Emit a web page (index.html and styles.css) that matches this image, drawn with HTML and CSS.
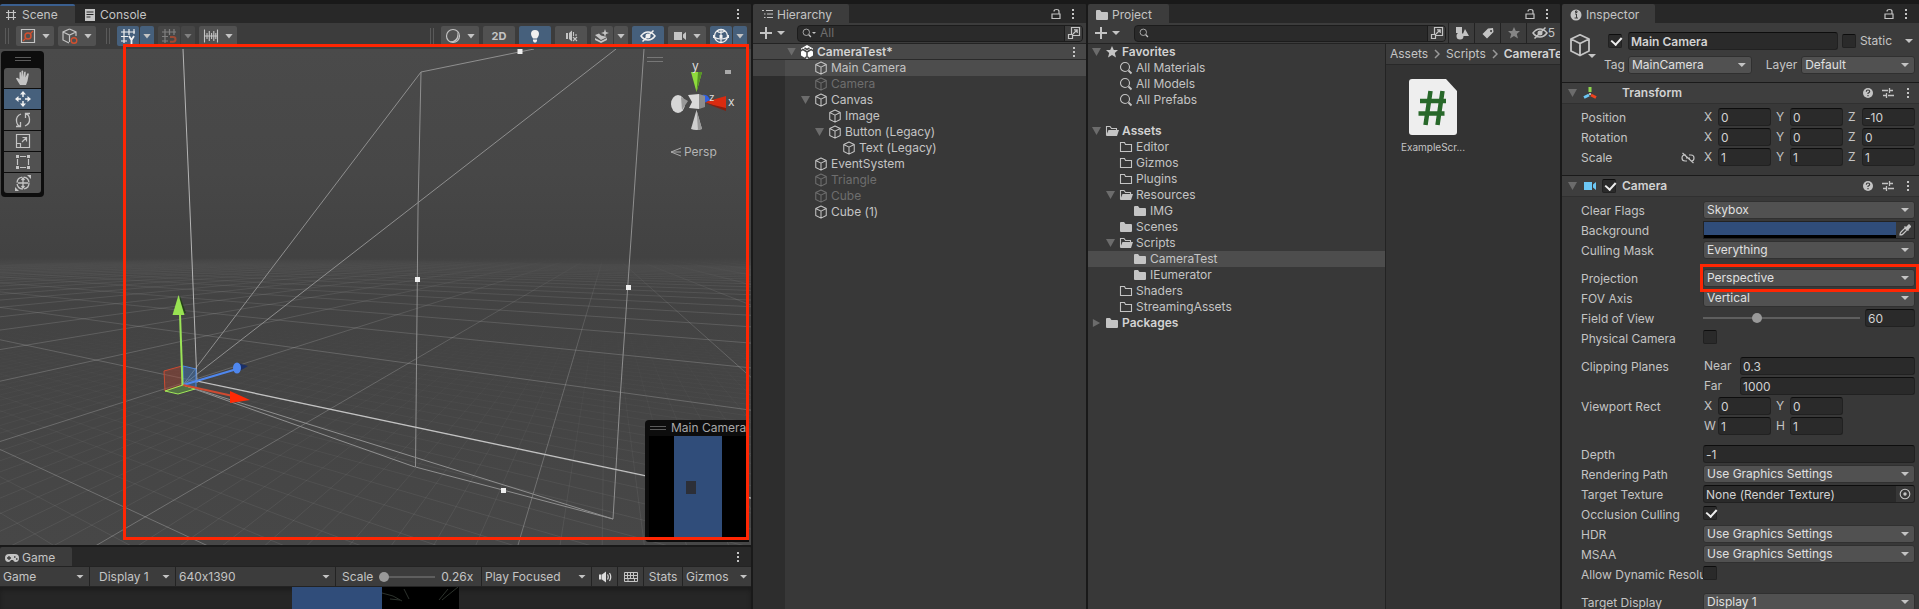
FILE: index.html
```html
<!DOCTYPE html>
<html lang="en">
<head>
<meta charset="utf-8">
<title>Editor - CameraTest</title>
<link rel="stylesheet" href="styles.css">
</head>
<body>
<svg class="sprite" aria-hidden="true">
  <symbol id="cube" viewBox="0 0 16 16"><path d="M8 1.2 14 4v8l-6 3-6-3V4zM2 4l6 3 6-3M8 7v8" fill="none" stroke="currentColor" stroke-width="1.2" stroke-linejoin="round"/></symbol>
  <symbol id="dots" viewBox="0 0 4 12"><path d="M1 1h2v2H1zM1 5h2v2H1zM1 9h2v2H1z" fill="currentColor"/></symbol>
  <symbol id="lock" viewBox="0 0 12 12"><path d="M2 6h8v4.5H2zM9 6V3.500Q9 1.500 6.500 1.500T4 3.500" fill="none" stroke="currentColor" stroke-width="1.2"/></symbol>
  <symbol id="folder" viewBox="0 0 14 12"><path d="M1 2q0-1 1-1h3l1.500 2H12q1 0 1 1v6q0 1-1 1H2q-1 0-1-1z" fill="currentColor"/></symbol>
  <symbol id="folder-empty" viewBox="0 0 14 12"><path d="M1.500 1.500h4l1 2h6v7h-11z" fill="none" stroke="currentColor" stroke-width="1.1"/></symbol>
  <symbol id="folder-open" viewBox="0 0 14 12"><path d="M1.500 10V1.500h3.500l1.500 2h5V5" fill="none" stroke="currentColor" stroke-width="1.1"/><path d="M3.500 5H14l-2 6H1z" fill="currentColor"/></symbol>
  <symbol id="search" viewBox="0 0 14 14"><circle cx="6" cy="6" r="4.500" fill="none" stroke="currentColor" stroke-width="1.100"/><path d="m9.500 9.500 3 3" stroke="currentColor" stroke-width="1.800"/></symbol>
  <symbol id="star" viewBox="0 0 14 14"><path d="m7 1 1.800 4H13L9.800 8l1.200 4.500L7 10l-4 2.500L4.200 8 1 5h4.200z" fill="currentColor"/></symbol>
  <symbol id="plus" viewBox="0 0 12 12"><path d="M6 0v12M0 6h12" stroke="currentColor" stroke-width="2"/></symbol>
  <symbol id="popout" viewBox="0 0 14 14"><path d="M4.500 8V1.500h8v8H6M1.500 8.500h4v4h-4zM6 8l4-4M7 3.800h3.200V7" fill="none" stroke="currentColor" stroke-width="1.200"/></symbol>
  <symbol id="help" viewBox="0 0 12 12"><circle cx="6" cy="6" r="5" fill="currentColor"/><path d="M4.300 4.800Q4.300 3 6 3t1.700 1.500Q7.700 5.500 6 6.200v.8M6 8v1.300" fill="none" stroke="#3c3c3c" stroke-width="1.200"/></symbol>
  <symbol id="preset" viewBox="0 0 12 12"><path d="M0 3.500h6M8 3.500h3M7.500 1v5M1 8.500h3M6 8.500h6M4.500 6v5" stroke="currentColor" stroke-width="1.300"/></symbol>
  <symbol id="eye-off" viewBox="0 0 16 14"><path d="M1 7q3-4 7-4t7 4q-3 4-7 4T1 7zM2.500 12.500l11-11" fill="none" stroke="currentColor" stroke-width="1.500"/><circle cx="8" cy="7" r="2.500" fill="currentColor"/></symbol>
  <symbol id="video" viewBox="0 0 14 12"><path d="M1 2h8v8H1zM10 4.500 13 2v8l-3-2.500z" fill="currentColor"/></symbol>
  <symbol id="camera-blue" viewBox="0 0 14 12"><path d="M1 2h8v8H1zM10 4.500 13 2v8l-3-2.500z" fill="#6cc7f5"/></symbol>
  <symbol id="grid-hash" viewBox="0 0 12 12"><path d="M3.500 1v10M8.500 1v10M1 3.500h10M1 8.500h10" stroke="currentColor" stroke-width="1.200"/></symbol>
  <symbol id="axes" viewBox="0 0 14 12"><path d="M7 0v5" stroke="#8fd94f" stroke-width="3"/><path d="m6 8-5 2.500" stroke="#6cc7f5" stroke-width="2.800"/><path d="m8 8 5 2.500" stroke="#f0431e" stroke-width="2.800"/><circle cx="7" cy="7" r="1" fill="#ddd"/></symbol>
</svg>

<main class="editor">
  <section class="left-column">
    <section class="panel scene-panel">
      <header class="tabs">
        <span class="tab tab-scene active"><svg class="i12"><use href="#grid-hash"/></svg>Scene</span>
        <span class="tab tab-plain"><svg class="i12" viewBox="0 0 12 12"><path d="M1 0h10v12H1z" fill="currentColor"/><path d="M2.500 3h7M2.500 5.500h7M2.500 8h4" stroke="#282828"/></svg>Console</span>
        <span class="tab-tools"><button class="bare" aria-label="Scene menu"><svg class="dots"><use href="#dots"/></svg></button></span>
      </header>
      <div class="scene-tools">
        <i class="grip"></i>
        <button class="tool drop" aria-label="Tool handle position"><svg class="i16" viewBox="0 0 16 16"><path d="M1.500 1.500h13v13h-13z" fill="none" stroke="currentColor" stroke-width="1.200"/><path d="m3 13 10-10" stroke="#d2502f" stroke-width="1.200"/><circle cx="8" cy="8" r="3" fill="#505050" stroke="#d2502f" stroke-width="1.500"/></svg></button>
        <button class="tool drop" aria-label="Tool handle rotation"><svg class="i16" viewBox="0 0 16 16"><path d="M7.500 1 14 4v4M7.500 1 1 4v8l6 3M1 4l6.500 3L14 4M7.500 7v7" fill="none" stroke="currentColor" stroke-width="1.200"/><circle cx="12" cy="12.500" r="2.800" fill="#505050" stroke="#d2502f" stroke-width="1.400"/></svg></button>
        <i class="grip wide"></i>
        <span class="split"><button class="tool on" aria-label="Grid visibility"><svg class="i16" viewBox="0 0 16 16"><path d="M4 1v14M9 1v6M14 1v5M1 4h14M1 8.500h7M1 13h6" stroke="currentColor" stroke-width="1.200"/><path d="m9 8 2.500 4L14 8M11.500 11.500V16" fill="none" stroke="currentColor" stroke-width="1.800"/></svg></button><button class="tool caret on" aria-label="Grid options"></button></span>
        <span class="split dim"><button class="tool" aria-label="Grid snapping"><svg class="i16" viewBox="0 0 16 16"><path d="M4 1v14M8.500 1v6M13 1v6M1 4h14M1 8.500h6M1 13h6" stroke="currentColor" stroke-width="1.200"/><path d="M9 9h3q2.500 0 2.500 2.300T12 13.800H9" fill="none" stroke="#ff5a30" stroke-width="2"/></svg></button><button class="tool caret" aria-label="Snap options"></button></span>
        <button class="tool drop" aria-label="Snap increment"><svg class="i16" viewBox="0 0 16 16"><path d="M1.500 1.500v13M14.500 1.500v13M4 5v6M6.300 3v10M8.600 5v6M10.800 3v10M12.800 5v6M1.500 8h13" stroke="currentColor" stroke-width="1.100"/></svg></button>
        <span class="spacer"></span>
        <i class="grip"></i>
        <button class="tool drop" aria-label="Draw mode"><svg class="i16" viewBox="0 0 16 16"><circle cx="8" cy="8" r="6.500" fill="none" stroke="currentColor" stroke-width="1.200"/><path d="M12 3.500Q15 8 12 12T4 13q6 1 8-4 1-3 0-5.500z" fill="currentColor"/></svg></button>
        <button class="tool wide-tool two-d">2D</button>
        <button class="tool wide-tool on" aria-label="Scene lighting"><svg class="i14" viewBox="0 0 14 14"><path d="M7 1a4 4 0 0 1 4 4q0 2-2 4.500H5Q3 7 3 5a4 4 0 0 1 4-4zM5 10.500h4V12l-1 1.500H6L5 12z" fill="currentColor"/></svg></button>
        <button class="tool wide-tool" aria-label="Scene audio"><svg class="i14" viewBox="0 0 14 14"><path d="M2 4h2v6H2zM5 4l3-2.500v11L5 10z" fill="currentColor"/><path d="M9.500 3v4M9 8l4 4M13 8l-4 4M12 5v2" stroke="currentColor" stroke-width="1.100"/></svg></button>
        <span class="split"><button class="tool" aria-label="Scene effects"><svg class="i16" viewBox="0 0 16 16"><path d="m1 7 4-1.500 2 2 4 1 2 .5-6 3zM1 10l6 3 6-3v2l-6 3-6-3z" fill="currentColor"/><path d="m11 1 1 3 3 1-3 1-1 3-1-3-3-1 3-1z" fill="currentColor"/></svg></button><button class="tool caret" aria-label="Effect options"></button></span>
        <button class="tool wide-tool on" aria-label="Scene visibility"><svg class="i16"><use href="#eye-off"/></svg></button>
        <button class="tool drop" aria-label="Scene camera"><svg class="i14"><use href="#video"/></svg></button>
        <span class="split"><button class="tool on" aria-label="Gizmo visibility"><svg class="i16" viewBox="0 0 16 16"><circle cx="8" cy="8" r="6.500" fill="none" stroke="currentColor" stroke-width="1.300"/><path d="M1.500 9.500q6.500 3 13 0M8 1.500v13M4 3q3 3 8 0" fill="none" stroke="currentColor" stroke-width="1.200"/><path d="M6.500 7h3v3h-3zM0 7h2v3H0zM14 7h2v3h-2z" fill="currentColor"/></svg></button><button class="tool caret on" aria-label="Gizmo options"></button></span>
      </div>
      <div class="viewport">
        <svg class="world" viewBox="0 49 751 496" preserveAspectRatio="xMinYMin slice">
          <defs>
            <linearGradient id="fade-major" gradientUnits="userSpaceOnUse" x1="0" y1="258" x2="0" y2="545"><stop offset="0" stop-color="#000"/><stop offset=".12" stop-color="#555"/><stop offset=".35" stop-color="#bbb"/><stop offset="1" stop-color="#fff"/></linearGradient>
            <linearGradient id="fade-minor" gradientUnits="userSpaceOnUse" x1="0" y1="320" x2="0" y2="545"><stop offset="0" stop-color="#000"/><stop offset="1" stop-color="#fff"/></linearGradient>
            <linearGradient id="sky" x1="0" y1="0" x2="0" y2="1"><stop offset="0" stop-color="#4a4a4a"/><stop offset=".25" stop-color="#474747"/><stop offset=".42" stop-color="#424242"/><stop offset=".435" stop-color="#474747"/><stop offset=".5" stop-color="#434343"/><stop offset="1" stop-color="#474747"/></linearGradient>
            <mask id="mask-major" maskUnits="userSpaceOnUse" x="0" y="49" width="751" height="496"><path d="M0 258h751v287H0z" fill="url(#fade-major)"/></mask>
            <mask id="mask-minor" maskUnits="userSpaceOnUse" x="0" y="49" width="751" height="496"><path d="M0 320h751v225H0z" fill="url(#fade-minor)"/></mask>
          </defs>
          <path d="M0 49h751v496H0z" fill="url(#sky)"/>
          <g mask="url(#mask-minor)"><path id="grid-minor" fill="none" stroke="#fff" stroke-opacity=".08"/></g>
          <g mask="url(#mask-major)"><path id="grid-major" fill="none" stroke="#fff" stroke-opacity=".25"/></g>
          <g fill="none" stroke="#8f8f8f">
            <path d="M183 385 421 72M183 385 616 49M183 385l232 82M183 385l430 134"/>
            <path d="M534 49 421 72l-3 138-2.500 257L613 519l7-119 13-190 11-161"/>
          </g>
          <path d="m183 49 6.500 150L197 383" fill="none" stroke="#b4b4b4"/>
          <path d="m197 381 554 117" fill="none" stroke="#c4c4c4" stroke-width="1.200"/>
          <path d="M517.500 49h5v5h-5zM501 488h5v5h-5zM415 277h5v5h-5zM626 285h5v5h-5z" fill="#eee"/>
          <path d="m164 371 18-5v19l-17 6z" fill="#b0402d" fill-opacity=".4" stroke="#cc4b32"/>
          <path d="m183 366 13 3v20l-13-4z" fill="#3d6fae" fill-opacity=".5" stroke="#4a86e0"/>
          <path d="m165 391 18-6 12 4-17 5z" fill="#5fa040" fill-opacity=".5" stroke="#a0e858"/>
          <path d="m238 363 10 3-10 6z" fill="#1b2f66"/><path d="m183 385 54-16" stroke="#4f87ee" stroke-width="2"/><ellipse cx="237" cy="368" rx="4" ry="5.500" fill="#4f87ee"/>
          <path d="m183 385 50 11" stroke="#cf4a30" stroke-width="2"/><path d="m230 391 20 9-20 3z" fill="#ff2a05"/>
          <path d="m180 296 6 17h-6z" fill="#24401a"/><path d="m180 314 2.500 71" stroke="#9be457" stroke-width="2"/><path d="m178.500 295 6 20h-12z" fill="#98e252"/>
        </svg>

        <aside class="palette" aria-label="Tools">
          <i class="handle"></i>
          <button class="tool first" aria-label="View"><svg class="i16" viewBox="0 0 16 16"><path d="M5 15 1 8.500q1-1.500 2.500 0l1 1V2.500q1-1 1.500 0L6.500 7V1q1-1 1.700 0v6l1-5q1-1 1.500 0L10.500 7.500l1.800-4q1.200-.5 1.500.5L12.500 11 11 15z" fill="currentColor"/></svg></button>
          <button class="tool on" aria-label="Move"><svg class="i16" viewBox="0 0 16 16"><path d="M8 3v3M8 10v3M3 8h3M10 8h3" stroke="currentColor" stroke-width="1.500"/><path d="m8 0 3 3.500H5zM8 16l3-3.500H5zM0 8l3.500-3v6zM16 8l-3.500-3v6z" fill="currentColor"/></svg></button>
          <button class="tool" aria-label="Rotate"><svg class="i16" viewBox="0 0 16 16"><path d="M6 2Q1 4 1.500 9t4 5M10 14q5-2 4.500-7t-4-5M10.500 6V1.500H15M5.500 10v4.500H1" fill="none" stroke="currentColor" stroke-width="1.300"/></svg></button>
          <button class="tool" aria-label="Scale"><svg class="i16" viewBox="0 0 16 16"><path d="M1.500 1.500h13v13h-13zM1.500 10.500h4v4M7 9l4-4M7.500 4.500h4v4" fill="none" stroke="currentColor" stroke-width="1.200"/></svg></button>
          <button class="tool" aria-label="Rect"><svg class="i16" viewBox="0 0 16 16"><path d="M5 2.500h6M5 13.500h6M2.500 5v6M13.500 5v6" stroke="currentColor" stroke-width="1.200"/><path d="M1 1h3v3H1zM12 1h3v3h-3zM1 12h3v3H1zM12 12h3v3h-3z" fill="currentColor"/></svg></button>
          <button class="tool last" aria-label="Transform"><svg class="i16" viewBox="0 0 16 16"><circle cx="8" cy="8" r="6" fill="none" stroke="currentColor" stroke-width="1.300" stroke-dasharray="8 1.400"/><path d="M8 3v10M3 8h10M6.500 5 8 3l1.500 2M6.500 11 8 13l1.500-2" fill="none" stroke="currentColor" stroke-width="1.300"/><path d="M12 0h4v4zM0 12v4h4z" fill="currentColor"/></svg></button>
        </aside>

        <figure class="orientation">
          <svg viewBox="0 0 70 80" class="gizmo">
            <path d="M0 7.500h16M0 11.500h16" stroke="#777"/>
            <path d="M44 22h11l-5.500 20z" fill="#8edb3c"/><path d="M51 22h4l-5.500 20z" fill="#569425"/>
            <path d="M49.500 60 44 79q5 2 11 0z" fill="#cfcfcf"/><path d="M49.500 60 51 80l4-1z" fill="#999"/>
            <path d="m58 52 21-6v14z" fill="#d92b10"/><path d="m58 53 21 5v3z" fill="#841f10"/>
            <path d="M55 45q6-1 8 5l-6 3z" fill="#2f5fe0"/>
            <path d="m41 45 11-1v15l-10-1 3-6z" fill="#dadada"/><path d="m52 44 6 2v11l-6 2z" fill="#8d8d8d"/>
            <ellipse cx="31" cy="54" rx="7" ry="9" fill="#d6d6d6"/><path d="m34 47 7 4-6 9z" fill="#999"/>
            <path d="M78 20h6v4h-6z" fill="#aaa"/>
          </svg>
          <span class="axis-y">y</span><span class="axis-z">z</span><span class="axis-x">x</span>
          <figcaption><svg class="i12" viewBox="0 0 12 12"><path d="M11 2 1 6l10 4M1 6h10" fill="none" stroke="#aaa"/></svg>Persp</figcaption>
        </figure>

        <aside class="preview">
          <header><i class="handle"></i>Main Camera</header>
          <div class="preview-image"><div class="preview-sky"><i class="preview-cube"></i></div></div>
        </aside>
      </div>
      <div class="highlight scene-highlight"></div>
    </section>

    <section class="panel game-panel">
      <header class="tabs">
        <span class="tab tab-game active"><svg class="i14" viewBox="0 0 14 12"><path d="M4 2h6q4 0 4 4t-3.500 4Q9 10 8 8H6q-1 2-2.500 2Q0 10 0 6t4-4z" fill="currentColor"/><path d="M4 4v4M2 6h4M9 5h1.500M11 7h1.500" stroke="#3c3c3c" stroke-width="1.300"/></svg>Game</span>
        <span class="tab-tools"><button class="bare" aria-label="Game menu"><svg class="dots"><use href="#dots"/></svg></button></span>
      </header>
      <div class="game-tools">
        <label class="pick g-game"><select aria-label="View"><option>Game</option></select></label>
        <label class="pick g-display"><select aria-label="Display"><option>Display 1</option></select></label>
        <label class="pick g-res"><select aria-label="Resolution"><option>640x1390</option></select></label>
        <label class="g-scale">Scale<input type="range" min="0" max="100" value="0"><span>0.26x</span></label>
        <label class="pick g-focus"><select aria-label="Play mode"><option>Play Focused</option></select></label>
        <button class="g-btn" aria-label="Mute audio"><svg class="i14" viewBox="0 0 14 14"><path d="M1 4.500h2.500v5H1zM4 4.500l4-3v11l-4-3z" fill="#ddd"/><path d="M9.500 4.500q1.500 2.500 0 5M11.500 3q2.500 4 0 8" fill="none" stroke="#ddd" stroke-width="1.200"/></svg></button>
        <button class="g-btn" aria-label="Shortcuts"><svg class="i14" viewBox="0 0 14 12"><path d="M.5 1.500h13v9H.5zM.5 4.500h13M.5 7.500h13M3.500 1.500v6M6.500 1.500v6M9.500 1.500v6M4 7.500v3M10.500 7.500v3" fill="none" stroke="currentColor"/></svg></button>
        <button class="g-btn g-stats">Stats</button>
        <button class="g-btn g-gizmos">Gizmos<i class="tri"></i></button>
      </div>
      <div class="game-view">
        <div class="game-sky"></div>
        <svg class="game-dark" viewBox="0 0 77 22"><path d="M0 0h77v22H0z" fill="#000"/><path d="M0 6q12 2 20 8M22 2l5 10M66 2 57 13M76 0 60 13M8 12l10 1" fill="none" stroke="#2c322c"/></svg>
      </div>
    </section>
  </section>

  <section class="panel hierarchy-panel">
    <header class="tabs">
      <span class="tab tab-hierarchy active"><svg class="i12" viewBox="0 0 12 12"><path d="M0 1.500h2M4 1.500h7M2 5h1.500M5 5h6M2 8.500h1.500M5 8.500h6" stroke="currentColor" stroke-width="1.200"/></svg>Hierarchy</span>
      <span class="tab-tools"><button class="bare" aria-label="Lock"><svg class="i12"><use href="#lock"/></svg></button><button class="bare" aria-label="Hierarchy menu"><svg class="dots"><use href="#dots"/></svg></button></span>
    </header>
    <div class="find-bar">
      <button class="bare add" aria-label="Create"><svg class="i12"><use href="#plus"/></svg><i class="tri"></i></button>
      <label class="find"><svg class="i10"><use href="#search"/></svg><i class="tri tiny"></i><input type="text" placeholder="All" aria-label="Search hierarchy"><button class="bare pop" aria-label="Open search"><svg class="i14"><use href="#popout"/></svg></button></label>
    </div>
    <ul class="tree hierarchy">
      <li class="scene-row d0"><i class="fold open"></i><svg class="i14" viewBox="0 0 14 14"><path d="M7 0 13 3.500v7L7 14l-6-3.500v-7z" fill="#fff"/><path d="m7 7-4-2.500M7 7l4-2.500M7 7v4.500M1 6l2-2M13 6l-2-2M5 13l2-1.500L9 13M4.500 3 7 4.500 9.500 3" stroke="#4a4a4a" stroke-width="1.500" fill="none"/></svg><b>CameraTest*</b><button class="bare row-menu" aria-label="Scene options"><svg class="dots"><use href="#dots"/></svg></button></li>
      <li class="selected d1"><i class="fold"></i><svg class="i14"><use href="#cube"/></svg>Main Camera</li>
      <li class="off d1"><i class="fold"></i><svg class="i14"><use href="#cube"/></svg>Camera</li>
      <li class="d1"><i class="fold open"></i><svg class="i14"><use href="#cube"/></svg>Canvas</li>
      <li class="d2"><i class="fold"></i><svg class="i14"><use href="#cube"/></svg>Image</li>
      <li class="d2"><i class="fold open"></i><svg class="i14"><use href="#cube"/></svg>Button (Legacy)</li>
      <li class="d3"><i class="fold"></i><svg class="i14"><use href="#cube"/></svg>Text (Legacy)</li>
      <li class="d1"><i class="fold"></i><svg class="i14"><use href="#cube"/></svg>EventSystem</li>
      <li class="off d1"><i class="fold"></i><svg class="i14"><use href="#cube"/></svg>Triangle</li>
      <li class="off d1"><i class="fold"></i><svg class="i14"><use href="#cube"/></svg>Cube</li>
      <li class="d1"><i class="fold"></i><svg class="i14"><use href="#cube"/></svg>Cube (1)</li>
    </ul>
  </section>

  <section class="panel project-panel">
    <header class="tabs">
      <span class="tab tab-project active"><svg class="i14"><use href="#folder"/></svg>Project</span>
      <span class="tab-tools"><button class="bare" aria-label="Lock"><svg class="i12"><use href="#lock"/></svg></button><button class="bare" aria-label="Project menu"><svg class="dots"><use href="#dots"/></svg></button></span>
    </header>
    <div class="find-bar project-bar">
      <button class="bare add" aria-label="Create"><svg class="i12"><use href="#plus"/></svg><i class="tri"></i></button>
      <label class="find"><svg class="i10"><use href="#search"/></svg><input type="text" aria-label="Search project"><button class="bare pop" aria-label="Open search"><svg class="i14"><use href="#popout"/></svg></button></label>
      <button class="p-btn" aria-label="Search by type"><svg class="i14" viewBox="0 0 14 14"><path d="M1 1h6v6H1zM10 3l4 7H7z" fill="currentColor"/><circle cx="5" cy="10" r="3.500" fill="currentColor"/></svg></button>
      <button class="p-btn" aria-label="Search by label"><svg class="i14" viewBox="0 0 14 14"><path fill-rule="evenodd" d="M7 2.500 12 2l.5 4-6.500 6.500L1.500 8zM10 4a1 1 0 1 0 .1 0z" fill="currentColor"/></svg></button>
      <button class="p-btn faint" aria-label="Save search"><svg class="i14"><use href="#star"/></svg></button>
      <button class="p-btn hidden-count" aria-label="Hidden packages: 5"><svg class="i16"><use href="#eye-off"/></svg>5</button>
    </div>
    <div class="project-body">
      <ul class="tree project">
        <li class="p0"><i class="fold open"></i><svg class="i14"><use href="#star"/></svg><b>Favorites</b></li>
        <li class="p1"><i class="fold"></i><svg class="i14"><use href="#search"/></svg>All Materials</li>
        <li class="p1"><i class="fold"></i><svg class="i14"><use href="#search"/></svg>All Models</li>
        <li class="p1 group-end"><i class="fold"></i><svg class="i14"><use href="#search"/></svg>All Prefabs</li>
        <li class="p0"><i class="fold open"></i><svg class="i14"><use href="#folder-open"/></svg><b>Assets</b></li>
        <li class="p1"><i class="fold"></i><svg class="i14"><use href="#folder-empty"/></svg>Editor</li>
        <li class="p1"><i class="fold"></i><svg class="i14"><use href="#folder-empty"/></svg>Gizmos</li>
        <li class="p1"><i class="fold"></i><svg class="i14"><use href="#folder-empty"/></svg>Plugins</li>
        <li class="p1"><i class="fold open"></i><svg class="i14"><use href="#folder-open"/></svg>Resources</li>
        <li class="p2"><i class="fold"></i><svg class="i14"><use href="#folder"/></svg>IMG</li>
        <li class="p1"><i class="fold"></i><svg class="i14"><use href="#folder"/></svg>Scenes</li>
        <li class="p1"><i class="fold open"></i><svg class="i14"><use href="#folder-open"/></svg>Scripts</li>
        <li class="p2 selected"><i class="fold"></i><svg class="i14"><use href="#folder"/></svg>CameraTest</li>
        <li class="p2"><i class="fold"></i><svg class="i14"><use href="#folder"/></svg>IEumerator</li>
        <li class="p1"><i class="fold"></i><svg class="i14"><use href="#folder-empty"/></svg>Shaders</li>
        <li class="p1"><i class="fold"></i><svg class="i14"><use href="#folder-empty"/></svg>StreamingAssets</li>
        <li class="p0"><i class="fold closed"></i><svg class="i14"><use href="#folder"/></svg><b>Packages</b></li>
      </ul>
      <div class="assets">
        <nav class="crumbs"><span>Assets</span><svg viewBox="0 0 6 10"><path d="m1 1 4 4-4 4" fill="none" stroke="#999" stroke-width="1.500"/></svg><span>Scripts</span><svg viewBox="0 0 6 10"><path d="m1 1 4 4-4 4" fill="none" stroke="#999" stroke-width="1.500"/></svg><b>CameraTest</b></nav>
        <figure class="asset">
          <svg viewBox="0 0 48 56"><path d="M3 0h34l11 12v41q0 3-3 3H3q-3 0-3-3V3q0-3 3-3z" fill="#eee"/><path d="m21.500 12-5 34M33.500 12l-5 34M11 22h26M9.500 34.500h26" stroke="#28682a" stroke-width="4.500"/></svg>
          <figcaption>ExampleScr...</figcaption>
        </figure>
      </div>
    </div>
  </section>

  <section class="panel inspector-panel">
    <header class="tabs">
      <span class="tab tab-inspector active"><svg class="i12" viewBox="0 0 12 12"><circle cx="6" cy="6" r="5.500" fill="currentColor"/><path d="M5 5h1.500v4M4.500 9h3.500M5.500 2h1.500v1.500H5.500z" fill="none" stroke="#3c3c3c"/></svg>Inspector</span>
      <span class="tab-tools"><button class="bare" aria-label="Lock"><svg class="i12"><use href="#lock"/></svg></button><button class="bare" aria-label="Inspector menu"><svg class="dots"><use href="#dots"/></svg></button></span>
    </header>
    <div class="object-head">
      <button class="bare object-icon" aria-label="Object icon"><svg><use href="#cube"/></svg><i class="tri"></i></button>
      <div class="object-fields">
        <div class="object-line"><input class="check" type="checkbox" checked aria-label="Active"><input class="field object-name" type="text" value="Main Camera" aria-label="Name"><input class="check" type="checkbox" id="static"><label for="static">Static</label><i class="tri"></i></div>
        <div class="object-line second"><label for="tag">Tag</label><span class="pick box tag-pick"><select id="tag"><option>MainCamera</option></select></span><label class="layer" for="layer">Layer</label><span class="pick box layer-pick"><select id="layer"><option>Default</option></select></span></div>
      </div>
    </div>

    <header class="component"><i class="fold open"></i><svg class="i14"><use href="#axes"/></svg><span class="no-check"></span><b>Transform</b><button class="bare" aria-label="Help"><svg class="i12"><use href="#help"/></svg></button><button class="bare" aria-label="Presets"><svg class="i12"><use href="#preset"/></svg></button><button class="bare" aria-label="Transform menu"><svg class="dots"><use href="#dots"/></svg></button></header>
    <div class="props transform-props">
      <div class="prop"><span>Position</span><div class="vector"><label>X<input class="field" value="0"></label><label>Y<input class="field" value="0"></label><label>Z<input class="field" value="-10"></label></div></div>
      <div class="prop"><span>Rotation</span><div class="vector"><label>X<input class="field" value="0"></label><label>Y<input class="field" value="0"></label><label>Z<input class="field" value="0"></label></div></div>
      <div class="prop"><span class="with-link">Scale<svg class="i14" viewBox="0 0 14 12"><path d="M5 3H4Q1 3 1 6t3 3h2M8 3h2q3 0 3 3t-2.500 3M5 6h4M1.500 1l11 10" fill="none" stroke="currentColor" stroke-width="1.200"/></svg></span><div class="vector"><label>X<input class="field" value="1"></label><label>Y<input class="field" value="1"></label><label>Z<input class="field" value="1"></label></div></div>
    </div>

    <header class="component"><i class="fold open"></i><svg class="i14"><use href="#camera-blue"/></svg><input class="check" type="checkbox" checked aria-label="Camera enabled"><b>Camera</b><button class="bare" aria-label="Help"><svg class="i12"><use href="#help"/></svg></button><button class="bare" aria-label="Presets"><svg class="i12"><use href="#preset"/></svg></button><button class="bare" aria-label="Camera menu"><svg class="dots"><use href="#dots"/></svg></button></header>
    <div class="props">
      <div class="prop"><label for="flags">Clear Flags</label><span class="pick box"><select id="flags"><option>Skybox</option></select></span></div>
      <div class="prop"><span>Background</span><div class="color"><button class="bare swatch" aria-label="Background color"></button><button class="bare" aria-label="Pick color"><svg class="i12" viewBox="0 0 12 12"><path d="M1 11q0-2 1-3l4-4 2 2-4 4q-1 1-3 1z" fill="none" stroke="currentColor" stroke-width="1.200"/><path d="m5.500 2.500 4 4M7 4l3-3 1.500 1.500-3 3z" stroke="currentColor" stroke-width="1.500" fill="currentColor"/></svg></button></div></div>
      <div class="prop"><label for="mask">Culling Mask</label><span class="pick box"><select id="mask"><option>Everything</option></select></span></div>
      <div class="prop gap"><label for="projection">Projection</label><span class="pick box"><select id="projection"><option>Perspective</option></select><i class="highlight prop-highlight"></i></span></div>
      <div class="prop"><label for="fov-axis">FOV Axis</label><span class="pick box"><select id="fov-axis"><option>Vertical</option></select></span></div>
      <div class="prop"><label for="fov">Field of View</label><div class="slider"><input id="fov" type="range" min="0" max="180" value="60"><input class="field" value="60" aria-label="Field of view value"></div></div>
      <div class="prop"><label for="physical">Physical Camera</label><input id="physical" class="check" type="checkbox"></div>
      <div class="prop gap"><span>Clipping Planes</span><label class="clip">Near<input class="field" value="0.3"></label></div>
      <div class="prop"><span></span><label class="clip">Far<input class="field" value="1000"></label></div>
      <div class="prop"><span>Viewport Rect</span><div class="vector"><label>X<input class="field" value="0"></label><label>Y<input class="field" value="0"></label></div></div>
      <div class="prop"><span></span><div class="vector"><label>W<input class="field" value="1"></label><label>H<input class="field" value="1"></label></div></div>
      <div class="prop gap"><label for="depth">Depth</label><input id="depth" class="field" value="-1"></div>
      <div class="prop"><label for="path">Rendering Path</label><span class="pick box"><select id="path"><option>Use Graphics Settings</option></select></span></div>
      <div class="prop"><label for="texture">Target Texture</label><div class="object-ref"><input id="texture" class="field" value="None (Render Texture)"><button class="bare" aria-label="Select texture"><svg class="i12" viewBox="0 0 12 12"><circle cx="6" cy="6" r="4.800" fill="none" stroke="currentColor" stroke-width="1.100"/><circle cx="6" cy="6" r="1.700" fill="currentColor"/></svg></button></div></div>
      <div class="prop"><label for="occlusion">Occlusion Culling</label><input id="occlusion" class="check" type="checkbox" checked></div>
      <div class="prop"><label for="hdr">HDR</label><span class="pick box"><select id="hdr"><option>Use Graphics Settings</option></select></span></div>
      <div class="prop"><label for="msaa">MSAA</label><span class="pick box"><select id="msaa"><option>Use Graphics Settings</option></select></span></div>
      <div class="prop"><label for="dynamic">Allow Dynamic Resolution</label><input id="dynamic" class="check" type="checkbox"></div>
      <div class="prop gap"><label for="target">Target Display</label><span class="pick box"><select id="target"><option>Display 1</option></select></span></div>
    </div>
  </section>
</main>
<script src="grid.js"></script>
</body>
</html>
```
FILE: grid.js
```js
// Ground grid: two families of lines, each running to its own vanishing point
// on the horizon and evenly spaced along the bottom edge of the view.
const HORIZON = 248;
const BOTTOM = 545;
const families = [
  { vanish: -434, start: 206, step: 765 },
  { vanish: 606, start: 97, step: 421 }
];

function lines(subdivisions, reach) {
  let d = "";
  for (const f of families) {
    for (let i = -reach; i <= reach; i++) {
      if (subdivisions > 1 && i % subdivisions === 0) continue;
      const x = f.start + (f.step * i) / subdivisions;
      // Extended past the bottom edge so that steep lines cross the whole view.
      const endX = f.vanish + (x - f.vanish) * 2;
      const endY = HORIZON + (BOTTOM - HORIZON) * 2;
      d += `M${f.vanish} ${HORIZON}L${endX.toFixed(1)} ${endY}`;
    }
  }
  return d;
}

document.getElementById("grid-major").setAttribute("d", lines(1, 24));
document.getElementById("grid-minor").setAttribute("d", lines(10, 90));
```
FILE: styles.css
```css
* { box-sizing: border-box; }

body {
  margin: 0;
  height: 100vh;
  overflow: hidden;
  background: #191919;
  color: #c4c4c4;
  font: 12px/16px Inter, "Liberation Sans", sans-serif;
  /* Keeps the "x" between digits a letter */
  font-feature-settings: "calt" 0;
}

button, input, select { font: inherit; font-feature-settings: inherit; color: inherit; margin: 0; }
button { cursor: pointer; }
ul, figure { margin: 0; padding: 0; }
ul { list-style: none; }
b { font-weight: 600; color: #d2d2d2; }
svg { flex: none; display: block; }
.sprite { position: absolute; width: 0; height: 0; }

.i10 { width: 10px; height: 10px; }
.i12 { width: 12px; height: 12px; }
.i14 { width: 14px; height: 14px; }
.i16 { width: 16px; height: 16px; }
.dots { width: 4px; height: 12px; }

.bare {
  display: flex;
  align-items: center;
  justify-content: center;
  padding: 0;
  border: 0;
  background: none;
}

.tri {
  flex: none;
  width: 8px;
  height: 4px;
  background: #c4c4c4;
  clip-path: polygon(0 0, 100% 0, 50% 100%);
}
.tri.tiny { width: 4px; height: 2px; }

/* Window layout */
.editor {
  display: grid;
  grid-template-columns: minmax(0, 751fr) minmax(0, 333fr) minmax(0, 472fr) minmax(0, 357fr);
  gap: 2px;
  height: 100%;
  padding-top: 4px;
}
.left-column {
  display: grid;
  grid-template-rows: minmax(0, 541fr) minmax(0, 62fr);
  gap: 2px;
  min-height: 0;
}
.panel {
  display: flex;
  flex-direction: column;
  min-width: 0;
  min-height: 0;
  overflow: hidden;
  background: #383838;
  border-radius: 2px 2px 0 0;
}

/* Tabs */
.tabs {
  display: flex;
  flex: none;
  height: 19px;
  background: #282828;
}
.tab {
  display: flex;
  align-items: center;
  gap: 5px;
  padding: 2px 0 0 9px;
}
.tab.active { background: #3c3c3c; border-radius: 2px 2px 0 0; }
.tab.tab-scene { width: 75px; padding: 0 0 0 5px; border-top: 2px solid #3a5f8f; }
.tab-plain { gap: 4px; }
.tab-game { width: 72px; padding-left: 5px; gap: 3px; }
.tab-hierarchy { width: 96px; gap: 3px; }
.tab-project { width: 81px; padding-left: 7px; gap: 3px; }
.tab-inspector { width: 93px; gap: 4px; padding-left: 8px; }
.tab-tools {
  display: flex;
  align-items: center;
  gap: 9px;
  margin-left: auto;
  padding-right: 11px;
}
.scene-panel { position: relative; }

/* Scene toolbar */
.scene-tools {
  display: flex;
  flex: none;
  align-items: center;
  gap: 4px;
  height: 26px;
  padding: 0 4px 0 5px;
  background: #3c3c3c;
}
.grip {
  width: 4px;
  height: 16px;
  margin-right: 3px;
  border: solid #5a5a5a;
  border-width: 0 1px;
}
.grip.wide { margin-left: 6px; }
.spacer { flex: 1; }
.tool {
  display: flex;
  align-items: center;
  justify-content: center;
  width: 22px;
  height: 20px;
  padding: 0;
  border: 0;
  border-radius: 2px;
  background: #515151;
  color: #c4c4c4;
}
.tool.on { background: #46607c; color: #f0f0f0; }
.tool.drop { width: 38px; gap: 6px; }
.tool.drop::after, .tool.caret::after {
  content: "";
  width: 8px;
  height: 5px;
  background: #c4c4c4;
  clip-path: polygon(0 0, 100% 0, 50% 100%);
}
.tool.caret { width: 14px; }
.tool.wide-tool { width: 32px; }
.two-d { font-weight: 700; font-size: 11px; }
.split { display: flex; gap: 1px; }
.split.dim { opacity: .5; }

/* Scene viewport */
.viewport { position: relative; flex: 1; min-height: 0; background: #474747; }
.world { width: 100%; height: 100%; }
.highlight { position: absolute; border: 3px solid #ff2603; pointer-events: none; }
.scene-highlight { inset: 40px 2px 5px 123px; }

.palette {
  position: absolute;
  top: 2px;
  left: 1px;
  display: flex;
  flex-direction: column;
  gap: 1px;
  padding: 6px 3px 4px;
  border-radius: 4px;
  background: #0d0d0d;
}
.handle {
  width: 16px;
  height: 4px;
  border: solid #5c5c5c;
  border-width: 1px 0;
}
.palette .handle { align-self: center; margin-bottom: 6px; }
.palette .tool { width: 37px; border-radius: 0; }
.palette .first { border-radius: 3px 3px 0 0; }
.palette .last { border-radius: 0 0 3px 3px; }

.orientation { position: absolute; top: 1px; right: 0; width: 104px; }
.gizmo { width: 70px; height: 80px; overflow: visible; }
.orientation span { position: absolute; color: #ddd; line-height: 12px; }
.axis-y { top: 10px; left: 45px; }
.axis-z { top: 41px; left: 62px; font-size: 10px; }
.axis-x { top: 46px; left: 81px; }
.orientation figcaption { display: flex; align-items: center; gap: 2px; padding: 14px 0 0 23px; color: #b4b4b4; }

.preview {
  position: absolute;
  right: 2px;
  bottom: 3px;
  width: 104px;
  overflow: hidden;
  padding: 0 2px 4px 4px;
  border-radius: 4px 0 0 4px;
  background: #0d0d0d;
}
.preview header { display: flex; align-items: center; gap: 5px; height: 16px; color: #a8a8a8; white-space: nowrap; }
.preview header .handle { flex: none; margin-left: 1px; }
.preview-image { display: flex; justify-content: center; height: 102px; background: #000; }
.preview-sky { display: flex; align-items: center; width: 48px; padding-left: 12px; background: #304d7a; }
.preview-cube { width: 10px; height: 13px; background: #2c2f38; }

/* Drop-downs */
.pick { position: relative; display: flex; align-items: center; min-width: 0; }
.pick select {
  width: 100%;
  height: 100%;
  padding: 0 16px 0 3px;
  border: 0;
  background: none;
  appearance: none;
}
.pick::after {
  content: "";
  position: absolute;
  right: 5px;
  width: 8px;
  height: 4px;
  background: #c4c4c4;
  clip-path: polygon(0 0, 100% 0, 50% 100%);
  pointer-events: none;
}
.pick.box {
  height: 18px;
  border: 1px solid #303030;
  border-radius: 3px;
  background: #515151;
  color: #e0e0e0;
}

/* Game view */
.game-tools {
  display: flex;
  flex: none;
  height: 21px;
  border-top: 1px solid #232323;
  border-bottom: 1px solid #232323;
  background: #3c3c3c;
}
.game-tools > * { flex: none; border: 0; border-right: 1px solid #232323; }
.g-game { width: 90px; }
.g-display { width: 86px; }
.g-display select { padding-left: 9px; }
.g-res { width: 160px; }
.g-scale { display: flex; align-items: center; gap: 6px; width: 146px; padding-left: 6px; }
.g-scale input { width: 56px; }
.g-focus { width: 110px; }
.g-btn {
  display: flex;
  align-items: center;
  justify-content: center;
  width: 26px;
  padding: 0;
  background: none;
}
.g-stats { width: 39px; }
.game-tools .g-gizmos { flex: 1; justify-content: flex-start; gap: 11px; padding-left: 3px; border: 0; }
.game-view { display: flex; flex: 1; padding-left: 292px; background: #262626; box-shadow: inset 0 3px 4px #1c1c1c; }
.game-sky { width: 90px; background: #304d7a; }
.game-dark { width: 77px; height: 22px; }

input[type="range"] { height: 12px; background: none; appearance: none; }
input[type="range"]::-webkit-slider-runnable-track { height: 2px; background: #5e5e5e; }
input[type="range"]::-webkit-slider-thumb {
  width: 10px;
  height: 10px;
  margin-top: -4px;
  border-radius: 50%;
  background: #999;
  appearance: none;
}

/* Search bars */
.find-bar {
  display: flex;
  flex: none;
  align-items: center;
  height: 20px;
  padding: 0 3px 0 7px;
  background: #3c3c3c;
}
.add { gap: 5px; margin-right: 12px; }
.find {
  display: flex;
  flex: 1;
  align-items: center;
  min-width: 0;
  height: 17px;
  padding-left: 4px;
  border: 1px solid #1c1c1c;
  border-radius: 4px;
  background: #2a2a2a;
}
.find input {
  flex: 1;
  min-width: 0;
  height: 14px;
  padding: 0 0 0 4px;
  border: 0;
  background: none;
}
.find input::placeholder { color: #6e6e6e; }
.pop { width: 18px; height: 15px; border-left: 1px solid #1c1c1c; background: #3c3c3c; border-radius: 0 3px 3px 0; }
.project-bar { padding-right: 0; }
.project-bar .add { margin-right: 14px; }
.project-bar .find { margin-right: 2px; }
.p-btn {
  display: flex;
  align-items: center;
  justify-content: center;
  width: 26px;
  height: 20px;
  padding: 0;
  border: 0;
  border-left: 1px solid #232323;
  background: none;
}
.p-btn.faint { color: #858585; }
.p-btn.hidden-count { width: 34px; }

/* Trees */
.tree { flex: 1; }
.tree li { display: flex; align-items: center; height: 16px; white-space: nowrap; }
.fold { flex: none; width: 9px; height: 8px; margin-right: 4px; }
.fold.open { background: #6c6c6c; clip-path: polygon(0 0, 100% 0, 50% 100%); }
.fold.closed { background: #6c6c6c; clip-path: polygon(10% 0, 90% 50%, 10% 100%); }
.hierarchy { background: linear-gradient(90deg, #2d2d2d 32px, #383838 32px); border-top: 1px solid #232323; }
.hierarchy svg:not(.dots) { margin-right: 3px; }
.tree .d0 { padding-left: 34px; }
.tree .d1 { padding-left: 48px; }
.tree .d2 { padding-left: 62px; }
.tree .d3 { padding-left: 76px; }
.hierarchy .scene-row { border-bottom: 1px solid #2a2a2a; background: #484848; }
.scene-row b { flex: 1; }
.row-menu { margin-right: 10px; }
.hierarchy .selected { background: linear-gradient(90deg, #434343 32px, #4d4d4d 32px); }
.off { color: #6e6e6e; }

.project-body {
  display: grid;
  flex: 1;
  grid-template-columns: minmax(0, 297fr) minmax(0, 174fr);
  gap: 1px;
  border-top: 1px solid #232323;
  background: #232323;
}
.project { background: #383838; }
.project svg { margin-right: 3px; }
.project .p0 { padding-left: 4px; }
.tree .p1 { padding-left: 18px; }
.tree .p2 { padding-left: 32px; }
.project .group-end { margin-bottom: 15px; }
.project .selected { background: #4d4d4d; }
.assets { overflow: hidden; background: #333; }
.crumbs {
  display: flex;
  align-items: center;
  gap: 6px;
  height: 21px;
  padding-left: 4px;
  border-bottom: 1px solid #282828;
  background: #3c3c3c;
  white-space: nowrap;
}
.crumbs svg { width: 6px; height: 10px; }
.asset {
  display: flex;
  flex-direction: column;
  align-items: center;
  gap: 4px;
  width: 94px;
  padding-top: 14px;
}
.asset svg { width: 48px; height: 56px; }
.asset figcaption { font-size: 10px; }

/* Inspector */
.object-head { display: flex; flex: none; gap: 12px; height: 59px; padding: 9px 4px 0 6px; background: #3c3c3c; }
.object-icon { position: relative; align-self: flex-start; width: 24px; height: 26px; }
.object-icon svg { width: 24px; height: 24px; }
.object-icon .tri { position: absolute; right: -4px; bottom: 0; }
.object-fields { flex: 1; min-width: 0; }
.object-line { display: flex; align-items: center; gap: 4px; height: 18px; }
.object-line.second { margin-top: 6px; }
.object-line.second label:first-child { margin-right: -1px; }
.object-line .check { margin-left: 4px; }
.object-line .object-name { flex: 1; margin-left: 2px; font-weight: 600; }
.object-line .object-name + .check { margin-left: 0; }
.object-line > .tri { margin: 0 2px 0 9px; }
.tag-pick { flex: 122; }
.layer-pick { flex: 112; }
.layer { margin-left: 10px; }

.field {
  width: 100%;
  min-width: 0;
  height: 18px;
  padding: 0 2px;
  border: 1px solid #212121;
  border-top-color: #0d0d0d;
  border-radius: 3px;
  background: #2a2a2a;
  color: #d2d2d2;
}
.check {
  flex: none;
  width: 14px;
  height: 14px;
  border: 1px solid #212121;
  border-top-color: #0d0d0d;
  border-radius: 2px;
  background: #2a2a2a;
  appearance: none;
}
.check:checked::after {
  content: "";
  display: block;
  width: 5px;
  height: 8px;
  margin: 0 0 0 4px;
  border: solid #eee;
  border-width: 0 2px 2px 0;
  transform: rotate(42deg);
}

.component {
  display: flex;
  flex: none;
  align-items: center;
  height: 22px;
  padding: 0 9px 0 6px;
  border-top: 1px solid #1a1a1a;
  border-bottom: 1px solid #303030;
  background: #3e3e3e;
}
.component .fold { margin-right: 6px; }
.component .check, .no-check { width: 14px; margin: 0 6px 0 5px; }
.component b { flex: 1; }
.component .bare { margin-left: 8px; }
.component .bare:last-child { margin-left: 12px; }

.props { padding: 4px 4px 0 19px; }
.transform-props { padding-bottom: 7px; }
.prop {
  display: grid;
  grid-template-columns: 122px minmax(0, 1fr);
  align-items: start;
  height: 20px;
}
.prop.gap { margin-top: 8px; }
.prop > :first-child { overflow: hidden; padding-right: 2px; line-height: 20px; white-space: nowrap; }
.prop > .check { margin-top: 1px; }
.prop > .with-link { display: flex; align-items: center; justify-content: space-between; }
.with-link svg { margin-right: 6px; }
.vector { display: grid; grid-template-columns: repeat(3, minmax(0, 1fr)); gap: 4px; }
.vector label { display: flex; align-items: center; justify-content: space-between; padding-left: 1px; }
.vector .field { width: 53px; }
.clip { display: grid; grid-template-columns: 36px minmax(0, 1fr); align-items: center; padding-left: 1px; }
.slider { display: grid; grid-template-columns: minmax(0, 1fr) 50px; gap: 5px; align-items: center; }
.color { display: grid; grid-template-columns: minmax(0, 1fr) 18px; height: 18px; border: 1px solid #232323; }
.swatch { border-bottom: 3px solid #000; background: #304d7a; }
.object-ref { position: relative; }
.object-ref .field { display: block; }
.object-ref .bare { position: absolute; top: 1px; right: 1px; width: 18px; height: 16px; background: #373737; border-radius: 0 2px 2px 0; }
.prop-highlight { inset: -6px -5px -6px -4px; z-index: 1; }
```
